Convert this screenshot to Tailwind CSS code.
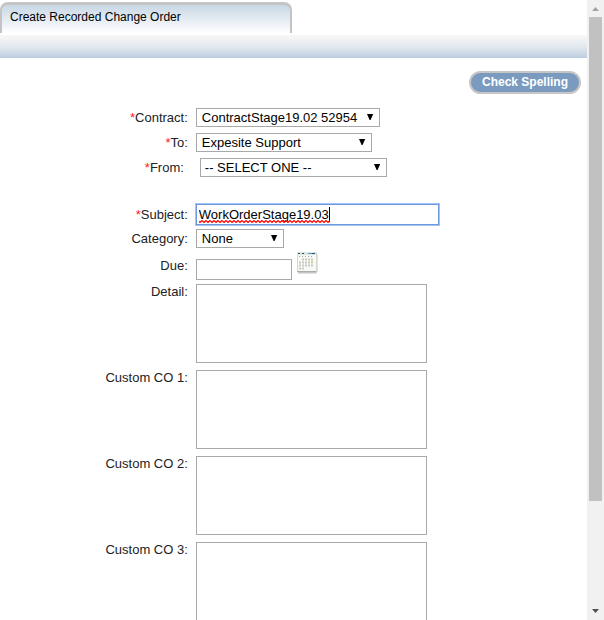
<!DOCTYPE html>
<html lang="en">
<head>
<meta charset="utf-8">
<title>Create Recorded Change Order</title>
<script src="https://cdn.jsdelivr.net/npm/@tailwindcss/browser@4"></script>
</head>
<body class="flex h-screen overflow-hidden bg-white text-[#222] text-[13px] leading-4 font-['Liberation_Sans',Arial,sans-serif]">
<svg class="hidden">
  <symbol id="arrow" viewBox="0 0 8 8"><path d="M1 1H7.2L4.600 7H3.600Z" fill="#000"/></symbol>
</svg>
<main class="min-w-0 flex-1 overflow-hidden">
  <header>
    <div class="flex h-[35px] pt-0.5">
      <h1 class="h-[31px] w-[292px] rounded-t-lg border-x-2 border-t-3 border-[#c4c4c4] bg-linear-to-b from-[#c8d7e5] to-white pt-1 pl-2 text-xs leading-4 text-black"><span>Create Recorded Change Order</span></h1>
    </div>
    <div class="h-[23px] bg-linear-to-b from-[#f8f8f8] via-[#e3e9ee] to-[#bccde0]"></div>
  </header>
  <form>
    <div class="flex justify-end pt-[13px] pr-[6px]">
      <button type="button" class="h-[23px] w-[112px] rounded-full border-2 border-[#c6c6c6] bg-[#7a9bbf] pb-px text-xs leading-4 font-bold text-white">Check Spelling</button>
    </div>
    <div class="mt-[14px] grid grid-cols-[32%_1fr] gap-x-2">
      <label for="contract" class="h-[25px] pt-0.5 text-right"><span class="text-[#ff2020]">*</span>Contract:</label>
      <div><div class="relative w-[184px]">
        <select id="contract" class="block h-[19px] w-full appearance-none border border-[#a9a9a9] bg-white pl-[5px] leading-4 text-black"><option>ContractStage19.02 52954</option></select>
        <svg class="pointer-events-none absolute top-[5px] right-[6px] size-2"><use href="#arrow"/></svg>
      </div></div>

      <label for="to" class="h-[25px] pt-0.5 text-right"><span class="text-[#ff2020]">*</span>To:</label>
      <div><div class="relative w-[176px]">
        <select id="to" class="block h-[19px] w-full appearance-none border border-[#a9a9a9] bg-white pl-[5px] leading-4 text-black"><option>Expesite Support</option></select>
        <svg class="pointer-events-none absolute top-[5px] right-[6px] size-2"><use href="#arrow"/></svg>
      </div></div>

      <label for="from" class="h-[46px] pt-0.5 pr-1 text-right"><span class="text-[#ff2020]">*</span>From:</label>
      <div class="pl-1"><div class="relative w-[187px]">
        <select id="from" class="block h-[19px] w-full appearance-none border border-[#a9a9a9] bg-white pl-1 leading-4 text-black"><option>-- SELECT ONE --</option></select>
        <svg class="pointer-events-none absolute top-[5px] right-[6px] size-2"><use href="#arrow"/></svg>
      </div></div>

      <label for="subject" class="h-[25px] pt-[3px] text-right"><span class="text-[#ff2020]">*</span>Subject:</label>
      <div><div class="relative w-[243px]">
        <input id="subject" type="text" value="WorkOrderStage19.03" class="block h-[21px] w-full border border-[#6c98dc] bg-white pl-0.5 leading-4 text-black ring-1 ring-[#a4c4f4] outline-none">
        <div class="pointer-events-none absolute top-[3px] left-[3px] flex">
          <span class="invisible h-4" aria-hidden="true">WorkOrderStage19.03</span>
          <span class="h-[15px] w-px bg-black"></span>
          <svg class="absolute top-[13px] left-0 h-[3px] w-full"><defs><pattern id="wave" width="4" height="3" patternUnits="userSpaceOnUse"><path d="M-1 .5L1 2.500L3 .5L5 2.500" fill="none" stroke="#f00" stroke-width="1.200"/></pattern></defs><rect width="100%" height="3" fill="url(#wave)"/></svg>
        </div>
      </div></div>

      <label for="category" class="h-[26px] pt-0.5 text-right">Category:</label>
      <div><div class="relative w-[88px]">
        <select id="category" class="block h-[19px] w-full appearance-none border border-[#a9a9a9] bg-white pl-[5px] leading-4 text-black"><option>None</option></select>
        <svg class="pointer-events-none absolute top-[5px] right-[6px] size-2"><use href="#arrow"/></svg>
      </div></div>

      <label for="due" class="h-[29px] pt-[3px] text-right">Due:</label>
      <div class="flex h-[29px] items-start gap-1 pt-1">
        <input id="due" type="text" class="block h-[21px] w-24 border border-[#a9a9a9] bg-white px-0.5 text-black outline-none">
        <button type="button" aria-label="Choose date" class="-mt-2">
          <svg class="block h-[23px] w-[22px]" viewBox="0 0 22 23">
            <path d="M2 3H21.500V20.500L20 22.500H2Z" fill="#c4c4c4"/>
            <path d="M1.500 1.500H20.500V20.500H1.500Z" fill="#f8f8f5" stroke="#d3d9d5"/>
            <path d="M1 1H20V4H1Z" fill="#dbe6e1"/>
            <path d="M2 2.500H4M6 2.500H8M16 2.500H19" stroke="#355a52"/>
            <path d="M12 2.500H16" stroke="#5a98d8"/>
            <path d="M3 5.500H18" stroke="#a0aaa4" stroke-dasharray="1 2"/>
            <path d="M6 8.500H18M3 11.500H18M3 14.500H18M3 17.500H9" stroke="#c5cac5" stroke-width="2" stroke-dasharray="2 1"/>
            <path d="M15 10H17" stroke="#f2dd8b" stroke-width="2"/>
            <path d="M1 20.500H20" stroke="#a9aeaa"/>
          </svg>
        </button>
      </div>

      <label for="detail" class="text-right">Detail:</label>
      <div class="h-[86px]"><textarea id="detail" class="block h-[79px] w-[231px] resize-none border border-[#a9a9a9] bg-white p-0.5 outline-none"></textarea></div>
      <label for="co1" class="text-right">Custom CO 1:</label>
      <div class="h-[86px]"><textarea id="co1" class="block h-[79px] w-[231px] resize-none border border-[#a9a9a9] bg-white p-0.5 outline-none"></textarea></div>
      <label for="co2" class="text-right">Custom CO 2:</label>
      <div class="h-[86px]"><textarea id="co2" class="block h-[79px] w-[231px] resize-none border border-[#a9a9a9] bg-white p-0.5 outline-none"></textarea></div>
      <label for="co3" class="text-right">Custom CO 3:</label>
      <div class="h-[86px]"><textarea id="co3" class="block h-[79px] w-[231px] resize-none border border-[#a9a9a9] bg-white p-0.5 outline-none"></textarea></div>
    </div>
  </form>
</main>
<aside aria-hidden="true" class="flex w-[17px] shrink-0 flex-col items-center bg-[#f1f1f1]">
  <svg class="h-[17px] w-[17px] shrink-0" viewBox="0 0 17 17"><path d="M5 11H12L8.500 7Z" fill="#a3a3a3"/></svg>
  <div class="h-[78%] w-[13px] bg-[#c1c1c1]"></div>
  <svg class="mt-auto h-[17px] w-[17px] shrink-0" viewBox="0 0 17 17"><path d="M5 6H12L8.500 10Z" fill="#505050"/></svg>
</aside>
</body>
</html>
